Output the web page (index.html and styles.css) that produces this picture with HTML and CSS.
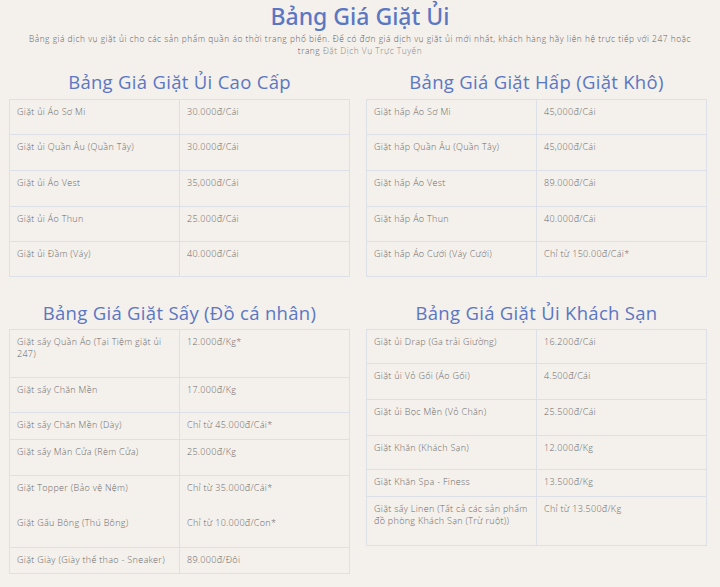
FILE: index.html
```html
<!DOCTYPE html>
<html lang="vi">
<head>
<meta charset="utf-8">
<title>Bảng Giá Giặt Ủi</title>
<link rel="stylesheet" href="styles.css">
</head>
<body>
<header class="intro">
  <h1 class="title">Bảng Giá Giặt Ủi</h1>
  <p class="lead">Bảng giá dịch vụ giặt ủi cho các sản phẩm quần áo thời trang phổ biến. Để có đơn giá dịch vụ giặt ủi mới nhất, khách hàng hãy liên hệ trực tiếp với 247 hoặc trang <a class="link" href="#">Đặt Dịch Vụ Trực Tuyến</a></p>
</header>
<main class="grid">
  <section class="block">
    <h2 class="heading">Bảng Giá Giặt Ủi Cao Cấp</h2>
    <table class="prices">
      <tr class="r35"><td>Giặt ủi Áo Sơ Mi</td><td>30.000đ/Cái</td></tr>
      <tr class="r36"><td>Giặt ủi Quần Âu (Quần Tây)</td><td>30.000đ/Cái</td></tr>
      <tr class="r36"><td>Giặt ủi Áo Vest</td><td>35,000đ/Cái</td></tr>
      <tr class="r35"><td>Giặt ủi Áo Thun</td><td>25.000đ/Cái</td></tr>
      <tr class="r35"><td>Giặt ủi Đầm (Váy)</td><td>40.000đ/Cái</td></tr>
    </table>
  </section>
  <section class="block">
    <h2 class="heading">Bảng Giá Giặt Hấp (Giặt Khô)</h2>
    <table class="prices">
      <tr class="r35"><td>Giặt hấp Áo Sơ Mi</td><td>45,000đ/Cái</td></tr>
      <tr class="r36"><td>Giặt hấp Quần Âu (Quần Tây)</td><td>45,000đ/Cái</td></tr>
      <tr class="r36"><td>Giặt hấp Áo Vest</td><td>89.000đ/Cái</td></tr>
      <tr class="r35"><td>Giặt hấp Áo Thun</td><td>40.000đ/Cái</td></tr>
      <tr class="r35"><td>Giặt hấp Áo Cưới (Váy Cưới)</td><td>Chỉ từ 150.00đ/Cái*</td></tr>
    </table>
  </section>
  <section class="block lower">
    <h2 class="heading">Bảng Giá Giặt Sấy (Đồ cá nhân)</h2>
    <table class="prices">
      <tr class="r48"><td>Giặt sấy Quần Áo (Tại Tiệm giặt ủi 247)</td><td>12.000đ/Kg*</td></tr>
      <tr class="r35"><td>Giặt sấy Chăn Mền</td><td>17.000đ/Kg</td></tr>
      <tr class="r27"><td>Giặt sấy Chăn Mền (Dày)</td><td>Chỉ từ 45.000đ/Cái*</td></tr>
      <tr class="r36"><td>Giặt sấy Màn Cửa (Rèm Cửa)</td><td>25.000đ/Kg</td></tr>
      <tr class="r72"><td><div>Giặt Topper (Bảo vệ Nệm)</div><div class="next">Giặt Gấu Bông (Thú Bông)</div></td><td><div>Chỉ từ 35.000đ/Cái*</div><div class="next">Chỉ từ 10.000đ/Con*</div></td></tr>
      <tr class="r26"><td>Giặt Giày (Giày thể thao - Sneaker)</td><td>89.000đ/Đôi</td></tr>
    </table>
  </section>
  <section class="block lower">
    <h2 class="heading">Bảng Giá Giặt Ủi Khách Sạn</h2>
    <table class="prices">
      <tr class="r34"><td>Giặt ủi Drap (Ga trải Giường)</td><td>16.200đ/Cái</td></tr>
      <tr class="r36"><td>Giặt ủi Vỏ Gối (Áo Gối)</td><td>4.500đ/Cái</td></tr>
      <tr class="r36"><td>Giặt ủi Bọc Mền (Vỏ Chăn)</td><td>25.500đ/Cái</td></tr>
      <tr class="r34"><td>Giặt Khăn (Khách Sạn)</td><td>12.000đ/Kg</td></tr>
      <tr class="r27"><td>Giặt Khăn Spa - Finess</td><td>13.500đ/Kg</td></tr>
      <tr class="r49"><td>Giặt sấy Linen (Tất cả các sản phẩm đồ phòng Khách Sạn (Trừ ruột))</td><td>Chỉ từ 13.500đ/Kg</td></tr>
    </table>
  </section>
</main>
</body>
</html>
```

FILE: styles.css
```css
html, body {
  margin: 0;
  padding: 0;
}
body {
  background: #f4f0eb;
  font-family: "Open Sans", "Noto Sans", sans-serif;
  color: #6f6f6f;
}
.intro {
  text-align: center;
  padding: 2px 0 0;
}
.title {
  margin: 0;
  font-family: "Noto Sans", "Open Sans", sans-serif;
  font-size: 23px;
  line-height: 28px;
  font-weight: 500;
  color: #5b77c3;
}
.lead {
  max-width: 676px;
  margin: 3px auto 0;
  font-size: 8.4px;
  line-height: 12px;
  letter-spacing: 0.52px;
  font-weight: 300;
  color: #5f5f5f;
}
.link {
  color: #8a8a8a;
  text-decoration: none;
}
.grid {
  display: grid;
  grid-template-columns: 341px 341px;
  column-gap: 16px;
  padding: 0 9px;
  margin-top: 13px;
}
.block.lower {
  margin-top: 24px;
}
.heading {
  margin: 0 0 5px;
  text-align: center;
  font-size: 18.5px;
  line-height: 24px;
  font-weight: 500;
  letter-spacing: 0.3px;
  color: #5b77c3;
  font-family: "Open Sans", sans-serif;
}
.block.lower .heading {
  margin-bottom: 4px;
}
.prices {
  width: 100%;
  border-collapse: collapse;
  table-layout: fixed;
  font-size: 9px;
  line-height: 12px;
  letter-spacing: 0.3px;
  font-weight: 300;
}
.prices td {
  border: 1px solid #dde0e6;
  vertical-align: top;
  padding: 6px 4px 0 7px;
  color: #6a6a6a;
}
.prices .next {
  margin-top: 23px;
}
.r26 { height: 26px; }
.r27 { height: 27px; }
.r34 { height: 34px; }
.r35 { height: 35px; }
.r36 { height: 36px; }
.r48 { height: 48px; }
.r49 { height: 49px; }
.r72 { height: 72px; }
```
